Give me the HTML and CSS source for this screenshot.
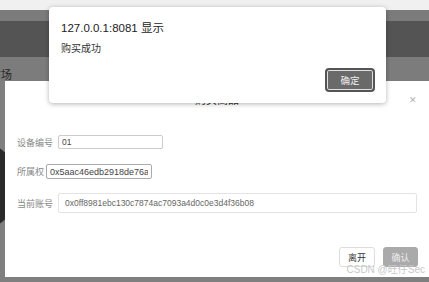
FILE: index.html
```html
<!DOCTYPE html>
<html>
<head>
    <title>Market</title>
    <link rel="stylesheet" href="styles.css">
</head>
<body>
    <div class="page">
        <div class="browser-strip"></div>
        <div class="nav-top"></div>
        <div class="nav-main"></div>
        <div class="nav-sub"><span class="crumb">市场</span></div>
        <div class="backdrop">
            <div class="avatar"></div>
        </div>

        <div class="modal">
            <div class="modal-header">
                <span class="modal-title">购买商品</span>
                <span class="modal-close">&#x2715;</span>
            </div>
            <div class="modal-body">
                <div class="row row-id">
                    <label>设备编号</label>
                    <input class="field field-id" type="text" value="01">
                </div>
                <div class="row row-owner">
                    <label>所属权</label>
                    <input class="field field-owner" type="text" value="0x5aac46edb2918de76ab6c">
                </div>
                <div class="row row-account">
                    <label>当前账号</label>
                    <input class="field field-account" type="text" value="0x0ff8981ebc130c7874ac7093a4d0c0e3d4f36b08">
                </div>
            </div>
            <div class="modal-footer">
                <button class="btn btn-leave">离开</button>
                <button class="btn btn-ok">确认</button>
            </div>
        </div>

        <div class="alert">
            <div class="alert-title">127.0.0.1:8081 显示</div>
            <div class="alert-msg">购买成功</div>
            <div class="alert-actions">
                <button class="alert-btn">确定</button>
            </div>
        </div>

        <div class="watermark">CSDN @旺仔Sec</div>
    </div>
</body>
</html>
```
FILE: styles.css
```css
body {
    margin: 0;
    font-family: "Liberation Sans", Arial, "Noto Sans CJK SC", sans-serif;
}

.page {
    position: relative;
    width: 429px;
    height: 282px;
    overflow: hidden;
    background-color: #7f7f7f;
}

.browser-strip {
    height: 10px;
    background-color: #f0f0f0;
}

.nav-top {
    height: 11px;
    background-color: #7b7b7b;
}

.nav-main {
    height: 36px;
    background-color: #545454;
}

.nav-sub {
    height: 24px;
    background-color: #7c7c7c;
    overflow: hidden;
}

.crumb {
    display: inline-block;
    margin-left: -10px;
    margin-top: 12px;
    font-size: 11px;
    line-height: 12px;
    color: #2a2a2a;
}

.backdrop {
    position: relative;
    height: 201px;
    background-color: #7f7f7f;
    border-bottom: 2px solid #5e5e5e;
}

.avatar {
    position: absolute;
    left: -70px;
    top: 60px;
    width: 90px;
    height: 90px;
    border-radius: 50%;
    background-color: #2a2a2a;
}

.modal {
    position: absolute;
    left: 5px;
    top: 81px;
    width: 424px;
    height: 196px;
    background-color: #fff;
    display: flex;
    flex-direction: column;
}

.modal-header {
    position: relative;
    height: 40px;
    text-align: center;
}

.modal-title {
    display: inline-block;
    margin-top: 12px;
    font-size: 11px;
    line-height: 14px;
    color: #333;
}

.modal-close {
    position: absolute;
    right: 12px;
    top: 14px;
    font-size: 9px;
    color: #b0b0b0;
}

.modal-body {
    padding: 14px 0 0 12px;
}

.row {
    display: flex;
    align-items: center;
}

.row label {
    font-size: 9px;
    color: #888;
    margin-right: 5px;
}

.row-owner {
    margin-top: 15px;
}

.row-account {
    margin-top: 14px;
}

.field {
    box-sizing: border-box;
    font-family: "Liberation Sans", Arial, sans-serif;
    font-size: 8.5px;
    color: #444;
    border: 1px solid #ccc;
    border-radius: 2px;
    padding: 0 3px;
    outline: none;
}

.field-id {
    width: 105px;
    height: 14px;
}

.field-owner {
    width: 106px;
    height: 15px;
    margin-left: -3px;
    border-color: #aaa;
    font-size: 9px;
}

.field-account {
    width: 359px;
    height: 20px;
    padding: 0 6px;
    border-color: #e3e3e3;
    color: #666;
}

.modal-footer {
    display: flex;
    justify-content: flex-end;
    gap: 8px;
    margin-top: 34px;
    padding-right: 11px;
}

.btn {
    height: 20px;
    padding: 0;
    font-family: "Noto Sans CJK SC", sans-serif;
    font-size: 9px;
    border-radius: 3px;
}

.btn-leave {
    width: 36px;
    background-color: #fff;
    border: 1px solid #ddd;
    color: #333;
}

.btn-ok {
    width: 35px;
    background-color: #aaa;
    border: 1px solid #aaa;
    color: #eee;
}

.alert {
    position: absolute;
    left: 49px;
    top: 7px;
    width: 337px;
    height: 96px;
    box-sizing: border-box;
    padding: 14px 11px 0 12px;
    background-color: #fff;
    border-radius: 4px;
    box-shadow: 0 1px 5px rgba(0, 0, 0, 0.3);
}

.alert-title {
    font-size: 11.5px;
    line-height: 14px;
    color: #222;
}

.alert-msg {
    margin-top: 8px;
    font-size: 10px;
    line-height: 12px;
    color: #333;
}

.alert-actions {
    display: flex;
    justify-content: flex-end;
    margin-top: 13px;
}

.alert-btn {
    width: 50px;
    height: 24px;
    padding: 0;
    background-color: #6a6a6a;
    border: 2px solid #555;
    box-shadow: inset 0 0 0 1px #e0e0e0;
    border-radius: 4px;
    color: #eee;
    font-family: "Noto Sans CJK SC", sans-serif;
    font-size: 9.5px;
}

.watermark {
    position: absolute;
    right: 4px;
    top: 264px;
    font-size: 10px;
    line-height: 12px;
    color: #c8c8c8;
}
```
